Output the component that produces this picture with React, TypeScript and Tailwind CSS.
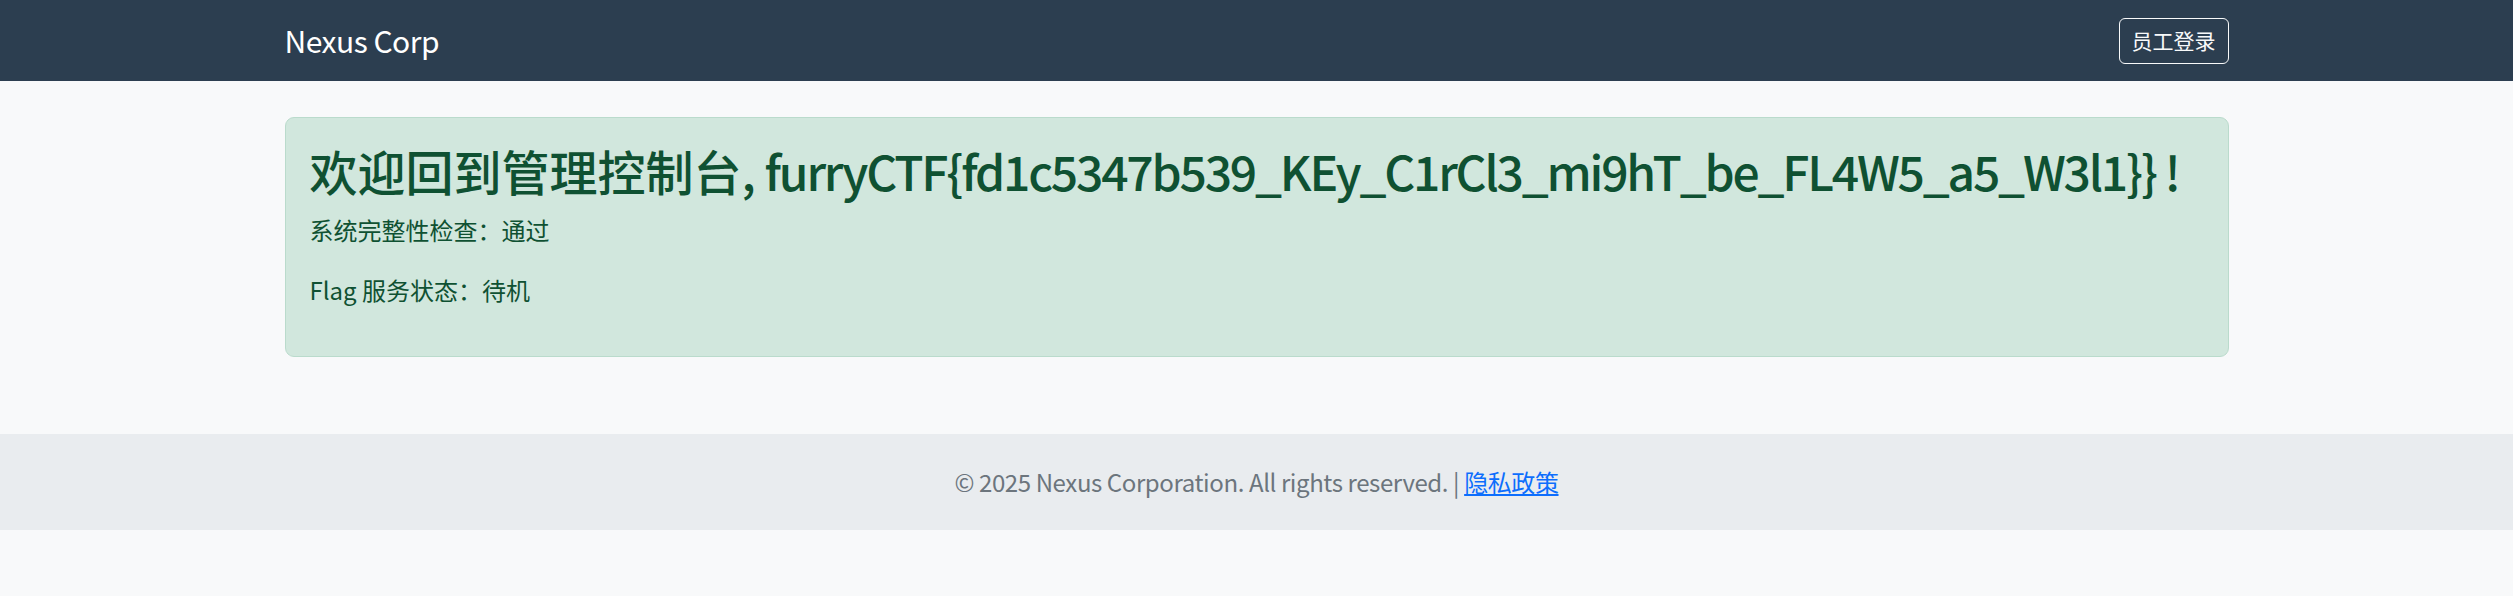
import React from "react";

export default function App() {
  return (
    <div className="min-h-[596px] bg-[#f8f9fa] font-['Noto_Sans_CJK_SC',sans-serif]">
      <nav className="h-[81px] bg-[#2c3e50]">
        <div className="mx-auto flex h-full w-[1980px] items-center justify-between px-[18px]">
          <span className="text-[30px] leading-[45px] tracking-[-0.5px] text-white">Nexus Corp</span>
          <button className="h-[46px] w-[110px] rounded-[6px] border border-[#f8f9fa] text-[21px] leading-[31px] text-[#f8f9fa]">
            员工登录
          </button>
        </div>
      </nav>
      <main className="mx-auto w-[1980px] px-[18px] pt-[36px]">
        <div className="rounded-[9px] border border-[#badbcc] bg-[#d1e7dd] p-[24px] text-[#0f5132]">
          <h2 className="mb-[12px] whitespace-nowrap text-[48px] font-medium leading-[57.6px] tracking-[-2.2px]">
            <span className="tracking-normal">欢迎回到管理控制台</span>,<span className="tracking-normal"> </span>furryCTF{"{"}fd1c5347b539_KEy_C1rCl3_mi9hT_be_FL4W5_a5_W3l1{"}"}{"}"} !
          </h2>
          <p className="mb-[24px] text-[24px] leading-[36px]">系统完整性检查：通过</p>
          <p className="mb-[24px] text-[24px] leading-[36px]">Flag 服务状态：待机</p>
        </div>
      </main>
      <footer className="mt-[77px] flex h-[96px] items-center justify-center bg-[#e9ecef] text-[24px] leading-[36px] tracking-[-0.4px] text-[#6c757d]">
        <span>
          © 2025 Nexus Corporation. All rights reserved. |{" "}
          <a href="#" className="text-[#0d6efd] underline">
            隐私政策
          </a>
        </span>
      </footer>
    </div>
  );
}
